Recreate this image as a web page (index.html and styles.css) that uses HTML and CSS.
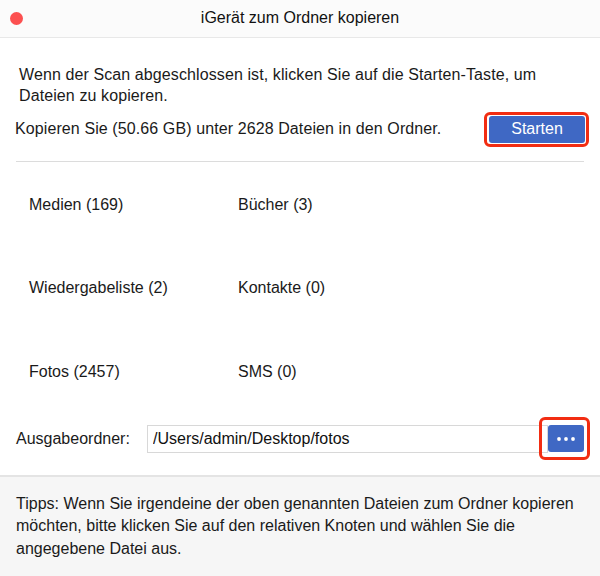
FILE: index.html
```html
<!DOCTYPE html>
<html lang="de">

<head>
    <meta charset="UTF-8">
    <meta name="viewport" content="width=device-width, initial-scale=1.0">
    <title>iGerät zum Ordner kopieren</title>
    <link rel="stylesheet" href="styles.css">
</head>

<body>
    <div class="window">
        <div class="titlebar">
            <span class="close-dot"></span>
            <p class="title">iGerät zum Ordner kopieren</p>
        </div>

        <div class="main">
            <p class="intro">Wenn der Scan abgeschlossen ist, klicken Sie auf die Starten-Taste, um Dateien zu kopieren.</p>
            <div class="summary">
                <p>Kopieren Sie (50.66 GB) unter 2628 Dateien in den Ordner.</p>
                <div class="highlight start-mark">
                    <button class="btn start">Starten</button>
                </div>
            </div>

            <div class="divider"></div>

            <div class="categories">
                <p>Medien (169)</p>
                <p>Bücher (3)</p>
                <p>Wiedergabeliste (2)</p>
                <p>Kontakte (0)</p>
                <p>Fotos (2457)</p>
                <p>SMS (0)</p>
            </div>

            <div class="output">
                <label for="path">Ausgabeordner:</label>
                <input type="text" id="path" value="/Users/admin/Desktop/fotos">
                <div class="highlight browse-mark">
                    <button class="btn browse">
                        <svg width="20" height="6" viewBox="0 0 20 6">
                            <circle cx="3" cy="3" r="1.9" fill="white" />
                            <circle cx="10" cy="3" r="1.9" fill="white" />
                            <circle cx="17" cy="3" r="1.9" fill="white" />
                        </svg>
                    </button>
                </div>
            </div>
        </div>

        <div class="tips">
            <p>Tipps: Wenn Sie irgendeine der oben genannten Dateien zum Ordner kopieren möchten, bitte klicken Sie auf den relativen Knoten und wählen Sie die angegebene Datei aus.</p>
        </div>
    </div>
</body>

</html>
```

FILE: styles.css
```css
body {
    margin: 0;
    font-family: "Liberation Sans", Arial, sans-serif;
    font-size: 16px;
    color: #1a1a1a;
    background-color: white;
}

p {
    margin: 0;
}

.window {
    width: 600px;
    height: 576px;
    display: flex;
    flex-direction: column;
}

.titlebar {
    height: 37px;
    background-color: #fbfbfb;
    border-bottom: 1px solid #e8e8e8;
    display: flex;
    align-items: center;
    justify-content: center;
    position: relative;
}

.close-dot {
    position: absolute;
    left: 10px;
    top: 12px;
    width: 13px;
    height: 13px;
    border-radius: 50%;
    background-color: #fc5050;
}

.title {
    font-size: 16px;
    color: #111;
}

.main {
    padding: 0 16px;
}

.intro {
    line-height: 21px;
    padding: 26px 0 0 3px;
    letter-spacing: 0.1px;
}

.summary {
    display: flex;
    align-items: center;
    justify-content: space-between;
    margin-top: 10px;
    margin-right: -15px;
    padding-right: 14px;
}

.summary p {
    margin-left: -1px;
    letter-spacing: 0.1px;
}

/* red annotation frames drawn over the buttons */
.highlight {
    position: relative;
    display: flex;
}

.highlight::after {
    content: "";
    position: absolute;
    border: 3px solid #f22d12;
    border-radius: 6px;
}

.start-mark::after {
    left: -5px;
    right: -4px;
    top: -4px;
    bottom: -4px;
}

.browse-mark::after {
    left: -9px;
    right: -6px;
    top: -8px;
    bottom: -8px;
}

.btn {
    background-color: #3f68c4;
    color: white;
    border: none;
    border-radius: 3px;
    font-family: "Liberation Sans", Arial, sans-serif;
    cursor: pointer;
}

.start {
    width: 96px;
    height: 27px;
    font-size: 16px;
}

.divider {
    height: 1px;
    background-color: #dcdcdc;
    margin-top: 18px;
}

.categories {
    display: grid;
    grid-template-columns: 209px 1fr;
    grid-template-rows: 83.5px 83.5px auto;
    padding: 34px 0 0 13px;
}

.output {
    display: flex;
    align-items: center;
    margin-top: 44px;
}

.output label {
    width: 131px;
    padding-top: 1px;
}

.output input {
    flex: 1;
    height: 28px;
    box-sizing: border-box;
    border: 1px solid #d8d8d8;
    padding: 0 5px;
    font-size: 16px;
    font-family: "Liberation Sans", Arial, sans-serif;
    color: #111;
}

.browse {
    width: 36px;
    height: 27px;
    padding: 0;
    display: flex;
    align-items: center;
    justify-content: center;
}

.tips {
    flex: 1;
    margin-top: 22px;
    background-color: #f6f6f6;
    border-top: 2px solid #e4e4e4;
    padding: 16px 16px;
}

.tips p {
    line-height: 22.5px;
}
```
